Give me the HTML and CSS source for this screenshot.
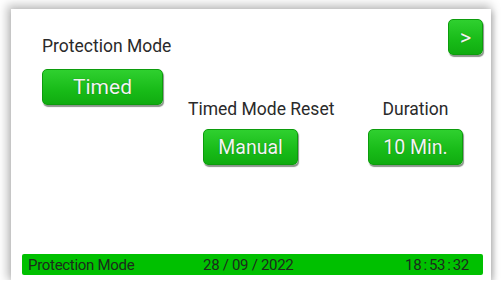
FILE: index.html
```html
<!DOCTYPE html>
<html>
<head>
<meta charset="utf-8">
<link rel="stylesheet" href="styles.css">
</head>
<body>
<div class="panel">
  <div class="content">
    <div class="col col-mode">
      <div class="label">Protection Mode</div>
      <div class="btn btn-mode">Timed</div>
    </div>
    <div class="col col-reset">
      <div class="label label-reset">Timed Mode Reset</div>
      <div class="btn btn-reset">Manual</div>
    </div>
    <div class="col col-duration">
      <div class="btn btn-next">&gt;</div>
      <div class="label label-duration">Duration</div>
      <div class="btn btn-duration">10 Min.</div>
    </div>
  </div>
  <div class="status">
    <span class="status-title">Protection Mode</span>
    <span class="status-date">28 / 09 / 2022</span>
    <span class="status-time">18 : 53 : 32</span>
  </div>
</div>
</body>
</html>
```
FILE: styles.css
```css
html, body {
  margin: 0;
  padding: 0;
  background: #ffffff;
  font-family: Roboto, "Noto Sans", "Liberation Sans", sans-serif;
}

.panel {
  box-sizing: border-box;
  margin: 9px 0 0 11px;
  width: 480px;
  height: 271px;
  background: #ffffff;
  box-shadow: -2px -2px 9px 2px rgba(0, 0, 0, 0.25), 2px 3px 6px rgba(0, 0, 0, 0.2);
  padding: 10px 8px 5px 11px;
  display: flex;
  flex-direction: column;
}

.content {
  flex: 1;
  display: flex;
  align-items: flex-start;
}

.col {
  display: flex;
  flex-direction: column;
}

.label {
  font-size: 17.5px;
  line-height: 20px;
  color: #2a2a2a;
  white-space: nowrap;
}

.btn {
  box-sizing: border-box;
  display: flex;
  align-items: center;
  justify-content: center;
  height: 36px;
  border-radius: 5px;
  background: linear-gradient(#2fd02f, #18bb18 60%, #10ac10);
  border: 1px solid #0c9c0c;
  box-shadow: 1px 2px 1px rgba(40, 60, 40, 0.55);
  color: #f2f5f2;
  text-shadow: 0 0 1px rgba(0, 60, 0, 0.6);
  white-space: nowrap;
}

.col-mode {
  margin-left: 20px;
  width: 121px;
}

.col-mode .label {
  margin-top: 17px;
}

.btn-mode {
  margin-top: 13px;
  width: 121px;
  font-size: 21px;
}

.col-reset {
  width: 185px;
  padding-left: 25px;
  box-sizing: border-box;
  align-items: flex-start;
}

.label-reset {
  margin-top: 80px;
}

.btn-reset {
  margin-top: 10px;
  margin-left: 15px;
  width: 95px;
  font-size: 19.5px;
}

.col-duration {
  flex: 1;
  align-items: center;
}

.btn-next {
  align-self: flex-end;
  width: 35px;
  height: 36px;
  font-size: 22px;
}

.label-duration {
  margin-top: 44px;
}

.btn-duration {
  margin-top: 10px;
  width: 95px;
  font-size: 19.5px;
}

.status {
  height: 21px;
  background: #00c000;
  border-radius: 2px;
  display: flex;
  align-items: center;
  padding: 0 14px 0 6px;
  font-size: 15px;
  letter-spacing: -0.3px;
  color: #1c2a1c;
}

.status-title {
  width: 175px;
}

.status-date {
  flex: 1;
}

.status-time {
  word-spacing: -1.3px;
}
```
